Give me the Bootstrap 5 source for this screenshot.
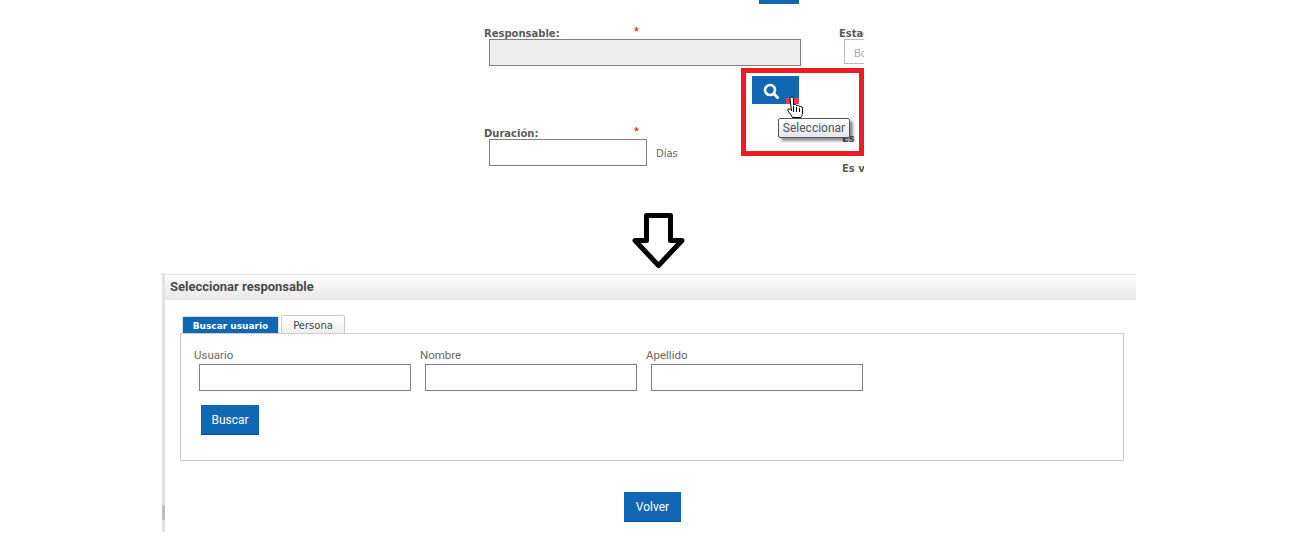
<!DOCTYPE html>
<html lang="es">

<head>
    <meta charset="UTF-8">
    <meta name="viewport" content="width=device-width, initial-scale=1.0">
    <title>Seleccionar responsable</title>
    <link rel="stylesheet" href="https://cdn.jsdelivr.net/npm/bootstrap@5.3.0/dist/css/bootstrap.min.css">
    <style>
        body {
            background-color: #fff;
            font-family: Roboto, "Open Sans", sans-serif;
            color: #555;
            overflow: hidden;
        }

        .crop-box {
            position: relative;
            width: 380px;
            height: 213px;
            margin-left: 484px;
        }

        .top-sliver {
            width: 40px;
            height: 4px;
            margin-left: 275px;
            background-color: #1067b4;
        }

        .form-top {
            margin-top: 23px;
            height: 45px;
        }

        .form-bottom {
            margin-top: 23px;
        }

        .left-col {
            width: 355px;
            flex: none;
        }

        .right-col {
            overflow: hidden;
            flex: none;
            width: 25px;
            white-space: nowrap;
        }

        .crop-label {
            font-family: "DejaVu Sans", sans-serif;
            font-size: 10px;
            font-weight: 700;
            padding-top: 2px;
            line-height: 10px;
            color: #5a5a5a;
        }

        .crop-label-name {
            width: 150px;
        }

        .req-star {
            color: #f00;
            font-size: 11px;
            line-height: 10px;
        }

        .crop-input {
            display: block;
            margin-left: 5px;
            height: 27px;
            border: 1px solid #808080;
            background-color: #fff;
        }

        .crop-input-wide {
            width: 312px;
            background-color: #eee;
        }

        .crop-input-short {
            width: 158px;
        }

        .estado-input {
            margin-left: 5px;
            width: 40px;
            height: 25px;
            border: 1px solid #bbb;
            padding: 7px 9px;
            font-size: 11px;
            line-height: 14px;
            color: #aaa;
        }

        .dias-text {
            font-family: "DejaVu Sans", sans-serif;
            font-size: 10px;
            color: #666;
            margin: 0 0 5px 9px;
        }

        .btn-blue {
            background-color: #1067b4;
            border: 0;
            border-bottom: 1px solid #0c4f8c;
            border-radius: 0;
            color: #fff;
            padding: 0;
        }

        .btn-search {
            display: block;
            width: 47px;
            height: 28px;
            margin: 4px 0 0 268px;
            border-bottom: 0;
            position: relative;
        }

        .btn-search svg {
            position: absolute;
            left: 11px;
            top: 7px;
        }

        .red-patch {
            position: absolute;
            right: 0;
            bottom: 0;
            width: 13px;
            height: 6px;
            background-color: #e04050;
        }

        .red-frame {
            position: absolute;
            left: 257px;
            top: 68px;
            width: 123px;
            height: 88px;
            border: 5px solid #ed1c24;
        }

        .tip-box {
            position: absolute;
            left: 294px;
            top: 118px;
            width: 72px;
            height: 20px;
            background: linear-gradient(#fff, #e4e5f0);
            border: 1px solid #555;
            border-radius: 2px;
            box-shadow: 3px 3px 3px rgba(0, 0, 0, .45);
            font-size: 12px;
            line-height: 18px;
            text-align: center;
            color: #555;
        }

        .hand-cursor {
            position: absolute;
            left: 302px;
            top: 96px;
        }

        .es-first {
            margin-top: 5px;
            padding-left: 3px;
        }

        .es-line {
            margin-top: 18px;
            padding-left: 3px;
        }

        .arrow-wrap {
            height: 57px;
            padding-left: 631px;
        }

        .panel-wrap {
            margin-left: 162px;
            height: 259px;
            margin-top: 3px;
        }

        .panel-strip {
            width: 3px;
            flex: none;
            background: linear-gradient(#e2e2e2 0 232px, #bdbdbd 232px 247px, #e2e2e2 247px);
        }

        .panel-main {
            width: 971px;
            flex: none;
        }

        .panel-head {
            height: 26px;
            margin-top: 1px;
            padding-left: 5px;
            border-top: 1px solid #e6e6e6;
            background: linear-gradient(#fdfdfd, #e9e7e8);
            font-size: 13px;
            font-weight: 700;
            line-height: 24px;
            color: #4a4a4a;
        }

        .tab-row {
            margin: 15px 0 0 17px;
            height: 18px;
            align-items: flex-end;
            gap: 2px;
        }

        .tab-item {
            font-family: "DejaVu Sans", sans-serif;
            text-align: center;
        }

        .tab-on {
            width: 97px;
            height: 17px;
            background-color: #1067b4;
            color: #fff;
            font-size: 9px;
            font-weight: 700;
            line-height: 18px;
            border: 1px solid #ddd;
            border-bottom: 0;
        }

        .tab-off {
            width: 64px;
            height: 18px;
            background: linear-gradient(#fff, #eee);
            border: 1px solid #ccc;
            border-bottom: 0;
            border-radius: 2px 2px 0 0;
            font-size: 10px;
            color: #444;
            line-height: 19px;
        }

        .search-box {
            width: 944px;
            height: 128px;
            margin-left: 15px;
            border: 1px solid #ccc;
            padding: 14px 0 0 13px;
        }

        .search-field {
            width: 226px;
        }

        .search-label {
            font-size: 11.5px;
            line-height: 14px;
            margin-bottom: 2px;
            color: #666;
        }

        .search-input {
            display: block;
            width: 212px;
            height: 27px;
            margin-left: 5px;
            border: 1px solid #808080;
        }

        .btn-buscar {
            display: block;
            width: 58px;
            height: 30px;
            margin: 14px 0 0 7px;
            font-size: 12px;
        }

        .btn-volver {
            width: 57px;
            height: 30px;
            margin-top: 31px;
            margin-left: 459px;
            font-size: 12px;
        }
    </style>
</head>

<body>
    <div class="crop-box">
        <div class="top-sliver"></div>

        <div class="form-top d-flex">
            <div class="left-col">
                <div class="d-flex">
                    <span class="crop-label crop-label-name">Responsable:</span>
                    <span class="req-star">*</span>
                </div>
                <input class="crop-input crop-input-wide" type="text" disabled>
            </div>
            <div class="right-col">
                <div class="crop-label">Estado</div>
                <div class="estado-input">Borrador</div>
            </div>
        </div>

        <button class="btn btn-blue btn-search" type="button">
            <svg width="16" height="16" viewBox="0 0 16 16" fill="none" stroke="#fff">
                <circle cx="7" cy="7" r="5" stroke-width="2.6" />
                <path d="M10.800 10.800l3.700 3.700" stroke-width="3" stroke-linecap="round" />
            </svg>
            <span class="red-patch"></span>
        </button>

        <div class="form-bottom d-flex">
            <div class="left-col">
                <div class="d-flex">
                    <span class="crop-label crop-label-name">Duración:</span>
                    <span class="req-star">*</span>
                </div>
                <div class="d-flex align-items-end">
                    <input class="crop-input crop-input-short" type="text">
                    <span class="dias-text">Días</span>
                </div>
            </div>
            <div class="right-col">
                <div class="crop-label es-first">Es</div>
                <div class="crop-label es-line">Es v</div>
            </div>
        </div>

        <div class="red-frame"></div>
        <div class="tip-box">Seleccionar</div>
        <svg class="hand-cursor" width="18" height="24" viewBox="0 0 18 24">
            <path d="M4 3c0-2.500 3.500-2.500 3.500 0v6c.5-1 3-1 3 .5v.5c.5-1 3-1 3 .5v.5c.5-1 3-.5 3 1v5c0 2-.8 3-1.500 4.500h-8.500c-1-2-2.500-4-4.500-6.500-1-1.500 .8-3 2-1.800l1.500 1.500z" fill="#fff" stroke="#000" stroke-width="1" stroke-linejoin="round" />
            <path d="M7.500 10v6M10.500 11v5M13.500 12v4" stroke="#000" stroke-width="1" fill="none" />
        </svg>
    </div>

    <div class="arrow-wrap">
        <svg class="d-block" width="55" height="57" viewBox="0 0 55 57">
            <path d="M15.500 2.500H39.500V27.500H51L27.500 52.500 4 27.500H15.500Z" fill="#fff" stroke="#000" stroke-width="5" stroke-linejoin="round" />
        </svg>
    </div>

    <div class="panel-wrap d-flex">
        <div class="panel-strip"></div>
        <div class="panel-main">
            <div class="panel-head">Seleccionar responsable</div>

            <div class="tab-row d-flex">
                <div class="tab-item tab-on">Buscar usuario</div>
                <div class="tab-item tab-off">Persona</div>
            </div>

            <div class="search-box">
                <div class="d-flex">
                    <div class="search-field">
                        <div class="search-label">Usuario</div>
                        <input class="search-input" type="text">
                    </div>
                    <div class="search-field">
                        <div class="search-label">Nombre</div>
                        <input class="search-input" type="text">
                    </div>
                    <div class="search-field">
                        <div class="search-label">Apellido</div>
                        <input class="search-input" type="text">
                    </div>
                </div>
                <button class="btn btn-blue btn-buscar" type="button">Buscar</button>
            </div>

            <button class="btn btn-blue btn-volver" type="button">Volver</button>
        </div>
    </div>

    <script src="https://cdn.jsdelivr.net/npm/bootstrap@5.3.0/dist/js/bootstrap.bundle.min.js"></script>
</body>

</html>
